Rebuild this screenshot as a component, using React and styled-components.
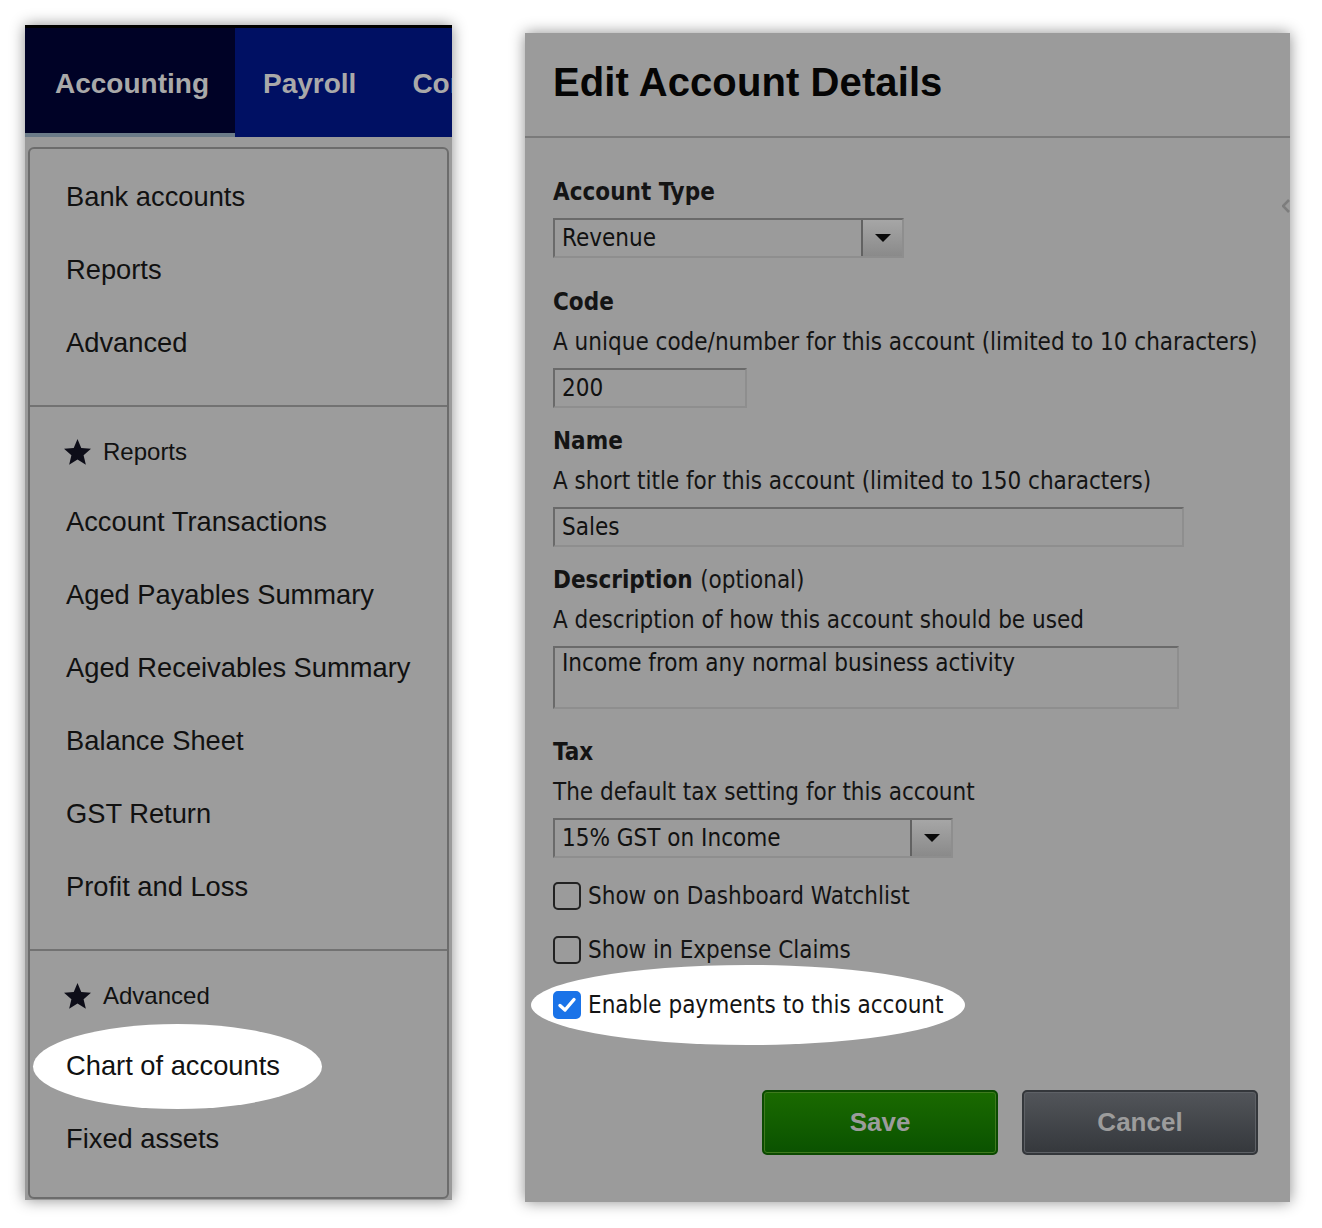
import styled, { createGlobalStyle } from 'styled-components'

const GlobalStyle = createGlobalStyle`
  body {
    margin: 0;
    background: #ffffff;
    font-family: "Liberation Sans", Arial, sans-serif;
  }
`

const Stage = styled.div`
  display: flex;
  align-items: flex-start;
  gap: 73px;
  padding: 25px 0 0 25px;
  height: 1228px;
  box-sizing: border-box;
`

/* ---------- left screenshot: accounting menu ---------- */

const MenuShot = styled.div`
  width: 427px;
  height: 1175px;
  display: flex;
  flex-direction: column;
  background: #9a9a9a;
  box-shadow: 0 0 14px rgba(0, 0, 0, 0.45);
  overflow: hidden;
`

const NavBar = styled.div`
  display: flex;
  height: 112px;
  flex-shrink: 0;
  background: #001063;
  border-top: 3px solid #000000;
  box-sizing: border-box;
  white-space: nowrap;
`

const NavTab = styled.div`
  display: flex;
  align-items: center;
  padding: 3px 28px 0;
  font-size: 28px;
  font-weight: bold;
  color: #a9a9a9;
  flex-shrink: 0;
  box-sizing: border-box;
  ${(p) =>
    p.$active &&
    `
    width: 210px;
    padding-left: 30px;
    padding-top: 7px;
    background: #000226;
    border-bottom: 4px solid #6b7b88;
  `}
`

const Menu = styled.div`
  flex: 1;
  margin: 10px 3px 2px;
  border: 2px solid #6c6c6c;
  border-radius: 6px;
  background: #9c9c9c;
  display: flex;
  flex-direction: column;
`

const MenuGroup = styled.div`
  padding: 11px 0 ${(p) => p.$bottom || 26}px;
  & + & {
    border-top: 2px solid #727272;
  }
`

const MenuItem = styled.div`
  position: relative;
  height: 73px;
  display: flex;
  align-items: center;
  padding-left: 36px;
  font-size: 27.3px;
  color: #111111;
`

const MenuHeading = styled.div`
  height: 67px;
  display: flex;
  align-items: center;
  gap: 12px;
  padding-left: 34px;
  font-size: 24px;
  color: #111111;
`

const Highlight = styled.span`
  position: absolute;
  left: ${(p) => p.$left}px;
  top: ${(p) => p.$top}px;
  width: ${(p) => p.$w}px;
  height: ${(p) => p.$h}px;
  border-radius: 50%;
  background: #ffffff;
`

const ItemText = styled.span`
  position: relative;
`

/* ---------- right screenshot: edit account form ---------- */

const FormShot = styled.div`
  position: relative;
  margin-top: 8px;
  width: 765px;
  height: 1169px;
  background: #9b9b9b;
  box-shadow: 0 0 14px rgba(0, 0, 0, 0.45);
  display: flex;
  flex-direction: column;
`

const Header = styled.div`
  height: 103px;
  flex-shrink: 0;
  display: flex;
  align-items: center;
  padding-left: 28px;
  border-bottom: 2px solid #7a7a7a;
`

const Title = styled.h1`
  margin: 0 0 4px;
  font-size: 40px;
  font-weight: bold;
  color: #050505;
  letter-spacing: 0.1px;
`

const Body = styled.div`
  padding: 40px 32px 0 28px;
  display: flex;
  flex-direction: column;
  font-family: "DejaVu Sans Condensed", "DejaVu Sans", sans-serif;
  font-stretch: condensed;
  color: #141414;
`

const Field = styled.div`
  display: flex;
  flex-direction: column;
  align-items: flex-start;
  gap: 12px;
  margin-bottom: ${(p) => p.$after}px;
`

const Label = styled.div`
  font-size: 24px;
  line-height: 28px;
  font-weight: bold;
  span {
    font-weight: normal;
  }
`

const Hint = styled.div`
  font-size: 24px;
  line-height: 28px;
`

const Input = styled.div`
  width: ${(p) => p.$w}px;
  height: ${(p) => p.$h || 40}px;
  box-sizing: border-box;
  border: 2px solid;
  border-color: #6a6a6a #8e8e8e #8e8e8e #6a6a6a;
  padding: ${(p) => (p.$multi ? '1px 7px' : '0 7px')};
  display: flex;
  align-items: ${(p) => (p.$multi ? 'flex-start' : 'center')};
  font-size: 24px;
  line-height: 28px;
  color: #111111;
`

const Select = styled.div`
  width: ${(p) => p.$w}px;
  height: 40px;
  box-sizing: border-box;
  border: 2px solid;
  border-color: #6a6a6a #8e8e8e #8e8e8e #6a6a6a;
  display: flex;
  font-size: 24px;
  color: #111111;
`

const SelectValue = styled.div`
  flex: 1;
  display: flex;
  align-items: center;
  padding-left: 7px;
`

const SelectArrow = styled.div`
  width: 39px;
  border-left: 2px solid #626262;
  background: linear-gradient(#a6a6a6, #8a8a8a);
  display: flex;
  align-items: center;
  justify-content: center;
`

const Triangle = styled.span`
  width: 0;
  height: 0;
  border-left: 8px solid transparent;
  border-right: 8px solid transparent;
  border-top: 8px solid #0a0a0a;
`

const CheckRow = styled.label`
  position: relative;
  display: flex;
  align-items: center;
  gap: 7px;
  height: 28px;
  margin-top: ${(p) => p.$top}px;
  font-size: 24px;
`

const Box = styled.span`
  position: relative;
  width: 28px;
  height: 28px;
  box-sizing: border-box;
  border-radius: 5px;
  border: 2px solid ${(p) => (p.$checked ? '#1a73e8' : '#222222')};
  background: ${(p) => (p.$checked ? '#1a73e8' : 'transparent')};
  display: flex;
  align-items: center;
  justify-content: center;
  flex-shrink: 0;
`

const CheckText = styled.span`
  position: relative;
`

const Buttons = styled.div`
  display: flex;
  justify-content: flex-end;
  gap: 24px;
  margin-top: 71px;
`

const Button = styled.div`
  width: 236px;
  height: 65px;
  box-sizing: border-box;
  border-radius: 5px;
  display: flex;
  align-items: center;
  justify-content: center;
  font-family: "Liberation Sans", Arial, sans-serif;
  font-size: 26px;
  font-weight: bold;
  color: #9c9c9c;
  border: 2px solid ${(p) => (p.$primary ? '#0b4a00' : '#34373b')};
  box-shadow: inset 0 0 0 1px ${(p) => (p.$primary ? '#3f7a1e' : '#5e6166')};
  background: ${(p) =>
    p.$primary
      ? 'linear-gradient(#1a6a00, #0a5200)'
      : 'linear-gradient(#52555a, #35383c)'};
`

const EdgeChevron = styled.svg`
  position: absolute;
  right: 0;
  top: 166px;
`

function CheckMark() {
  return (
    <svg width="20" height="18" viewBox="0 0 20 18">
      <path d="M3 9.5 L8 14 L17 3.5" fill="none" stroke="#ffffff" strokeWidth="3.4" strokeLinecap="round" strokeLinejoin="round" />
    </svg>
  )
}

function Star() {
  return (
    <svg width="27" height="26" viewBox="0 0 27 26">
      <path
        d="M13.5 0 L17.26 9.03 L27 9.81 L19.58 16.17 L21.85 25.69 L13.5 20.59 L5.15 25.69 L7.42 16.17 L0 9.81 L9.74 9.03 Z"
        fill="#0d0d18"
      />
    </svg>
  )
}

const mainItems = ['Bank accounts', 'Reports', 'Advanced']
const reportItems = [
  'Account Transactions',
  'Aged Payables Summary',
  'Aged Receivables Summary',
  'Balance Sheet',
  'GST Return',
  'Profit and Loss',
]

function AccountingMenu() {
  return (
    <MenuShot>
      <NavBar>
        <NavTab $active>Accounting</NavTab>
        <NavTab>Payroll</NavTab>
        <NavTab>Contacts</NavTab>
      </NavBar>
      <Menu>
        <MenuGroup>
          {mainItems.map((item) => (
            <MenuItem key={item}>{item}</MenuItem>
          ))}
        </MenuGroup>
        <MenuGroup>
          <MenuHeading>
            <Star />
            Reports
          </MenuHeading>
          {reportItems.map((item) => (
            <MenuItem key={item}>{item}</MenuItem>
          ))}
        </MenuGroup>
        <MenuGroup $bottom={22}>
          <MenuHeading>
            <Star />
            Advanced
          </MenuHeading>
          <MenuItem>
            <Highlight $left={3} $top={-5} $w={289} $h={85} />
            <ItemText>Chart of accounts</ItemText>
          </MenuItem>
          <MenuItem>Fixed assets</MenuItem>
        </MenuGroup>
      </Menu>
    </MenuShot>
  )
}

function EditAccount() {
  return (
    <FormShot>
      <Header>
        <Title>Edit Account Details</Title>
      </Header>
      <Body>
        <Field $after={30}>
          <Label>Account Type</Label>
          <Select $w={351}>
            <SelectValue>Revenue</SelectValue>
            <SelectArrow>
              <Triangle />
            </SelectArrow>
          </Select>
        </Field>
        <Field $after={19}>
          <Label>Code</Label>
          <Hint>A unique code/number for this account (limited to 10 characters)</Hint>
          <Input $w={194}>200</Input>
        </Field>
        <Field $after={19}>
          <Label>Name</Label>
          <Hint>A short title for this account (limited to 150 characters)</Hint>
          <Input $w={631}>Sales</Input>
        </Field>
        <Field $after={29}>
          <Label>
            Description <span>(optional)</span>
          </Label>
          <Hint>A description of how this account should be used</Hint>
          <Input $w={626} $h={63} $multi>
            Income from any normal business activity
          </Input>
        </Field>
        <Field $after={0}>
          <Label>Tax</Label>
          <Hint>The default tax setting for this account</Hint>
          <Select $w={400}>
            <SelectValue>15% GST on Income</SelectValue>
            <SelectArrow>
              <Triangle />
            </SelectArrow>
          </Select>
        </Field>
        <CheckRow $top={24}>
          <Box />
          <CheckText>Show on Dashboard Watchlist</CheckText>
        </CheckRow>
        <CheckRow $top={26}>
          <Box />
          <CheckText>Show in Expense Claims</CheckText>
        </CheckRow>
        <CheckRow $top={27}>
          <Highlight $left={-22} $top={-26} $w={434} $h={80} />
          <Box $checked>
            <CheckMark />
          </Box>
          <CheckText>Enable payments to this account</CheckText>
        </CheckRow>
        <Buttons>
          <Button $primary>Save</Button>
          <Button>Cancel</Button>
        </Buttons>
      </Body>
      <EdgeChevron width="8" height="14" viewBox="0 0 8 14">
        <path d="M7 1 L1 7 L7 13" fill="none" stroke="#7d7d7d" strokeWidth="2.5" />
      </EdgeChevron>
    </FormShot>
  )
}

export default function App() {
  return (
    <>
      <GlobalStyle />
      <Stage>
        <AccountingMenu />
        <EditAccount />
      </Stage>
    </>
  )
}
